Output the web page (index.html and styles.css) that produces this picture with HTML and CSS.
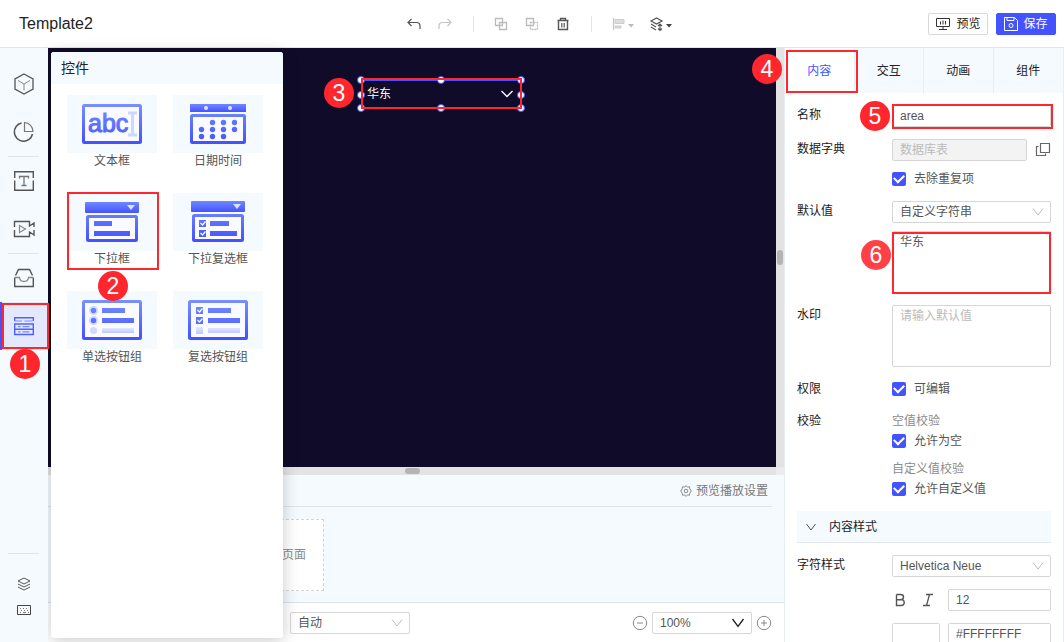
FILE: index.html
```html
<!DOCTYPE html>
<html lang="zh-CN">
<head>
<meta charset="utf-8">
<title>Template2</title>
<link rel="stylesheet" href="styles.css">
</head>
<body>
<svg class="defs" width="0" height="0" aria-hidden="true">
  <defs>
    <linearGradient id="g" x1="0" y1="9" x2="0" y2="49" gradientUnits="userSpaceOnUse"><stop offset="0" stop-color="#7890ff"/><stop offset="1" stop-color="#4350ff"/></linearGradient>
    <linearGradient id="bar" x1="0" y1="0" x2="0" y2="1"><stop offset="0" stop-color="#7088ff"/><stop offset="1" stop-color="#4553ff"/></linearGradient>
    <linearGradient id="pale" x1="0" y1="0" x2="0" y2="1"><stop offset="0" stop-color="#e3e8ff"/><stop offset="1" stop-color="#bcc8ff"/></linearGradient>
  </defs>
</svg>
<div class="app">
  <header class="topbar">
    <h1 class="title">Template2</h1>
    <div class="tools">
      <button class="tool" aria-label="撤销"><svg width="16" height="16" viewBox="0 0 16 16"><path d="M5.500 3 2 6.500 5.500 10M2 6.500h8.500q3.500 0 3.500 3.500v3" stroke="#555" stroke-width="1.200"/></svg></button>
      <button class="tool" aria-label="重做"><svg width="16" height="16" viewBox="0 0 16 16"><path d="M10.500 3 14 6.500 10.500 10M14 6.500H5.500Q2 6.500 2 10v3" stroke="#c4c4c4" stroke-width="1.200"/></svg></button>
      <i class="sep"></i>
      <button class="tool" aria-label="组合"><svg width="16" height="16" viewBox="0 0 16 16"><path d="M2.500 2.500h7v7h-7zM6.500 6.500h7v7h-7z" stroke="#bbb" stroke-width="1.300"/></svg></button>
      <button class="tool" aria-label="取消组合"><svg width="16" height="16" viewBox="0 0 16 16"><path d="M2.500 2.500h7v7h-7z" stroke="#bbb" stroke-width="1.300"/><path d="M6.500 6.500h7v7h-7z" stroke="#bbb" stroke-width="1.300" stroke-dasharray="2 1"/></svg></button>
      <button class="tool" aria-label="删除"><svg width="16" height="16" viewBox="0 0 16 16"><path d="M2.500 4.500h11M5.500 4V2.500h5V4M3.500 5v8.500h9V5" stroke="#555" stroke-width="1.400"/><path d="M6.500 7v4.500M8 7v4.500M9.500 7v4.500" stroke="#777"/></svg></button>
      <i class="sep"></i>
      <button class="tool wide" aria-label="对齐"><svg width="24" height="16" viewBox="0 0 24 16"><path d="M2.500 2v12" stroke="#c4c4c4" stroke-width="1.200"/><path d="M4 3.500h9v4H4zM4 10h6v2H4z" fill="#ddd" stroke="#ccc"/><path d="M17 8h6l-3 3.500z" fill="#bbb"/></svg></button>
      <button class="tool wide" aria-label="图层顺序"><svg width="24" height="16" viewBox="0 0 24 16"><path d="M2 5 7.500 2 13 5 7.500 8zM2 8l5 3M2 11l5 3M11 8v6.500M9 10l2-2 2 2M9 12.500l2 2 2-2" stroke="#555" stroke-width="1.200"/><path d="M17 8h6l-3 3.500z" fill="#444"/></svg></button>
    </div>
    <div class="actions">
      <button class="btn"><svg width="16" height="14" viewBox="0 0 16 14"><path d="M1.500 1.500h13v8h-13zM4 12.500h8M8 10v2M5.500 4.500v3M8 3.500v4M10.500 4v3.500" stroke="#333"/></svg>预览</button>
      <button class="btn primary"><svg width="14" height="14" viewBox="0 0 14 14"><path d="M.5.5h10l3 3v10H.5zM3 .5v3h7v-3" stroke="#fff"/><circle cx="7" cy="8.500" r="2" stroke="#fff"/></svg>保存</button>
    </div>
  </header>

  <nav class="rail" aria-label="组件类型">
    <button class="rail-item" aria-label="模型"><svg width="22" height="22" viewBox="0 0 22 22"><path d="M11 1 20 6v10l-9 5-9-5V6z" stroke="#555" stroke-width="1.300"/><path d="M5 7.500l6 3.500 6-3.500M11 11v6.500" stroke="#888"/></svg></button>
    <button class="rail-item" aria-label="图表"><svg width="22" height="22" viewBox="0 0 22 22"><path d="M8.500 2a9.200 9.200 0 1 0 11 11" stroke="#555" stroke-width="1.500"/><path d="M11.500 1.500v9h8.500a9 9 0 0 0-8.500-9z" stroke="#777" stroke-width="1.200"/></svg></button>
    <i class="rule"></i>
    <button class="rail-item" aria-label="文本"><svg width="22" height="22" viewBox="0 0 22 22"><path d="M1.700 8V1.700h18.600V8M1.700 10.500v9.800h18.600v-9.800" stroke="#555" stroke-width="1.400"/><path d="M6.500 8.500v-2h9v2M11 6.500v9M8.500 15.500h5" stroke="#777" stroke-width="1.300"/></svg></button>
    <button class="rail-item" aria-label="媒体"><svg width="22" height="22" viewBox="0 0 22 22"><path d="M1.500 9V3.500h15V8l4.500-3v4M1.500 12v6.500h15V14l4.500 3v-5" stroke="#555" stroke-width="1.400"/><path d="M6.500 7.500v7l6-3.500z" stroke="#888" stroke-width="1.200"/></svg></button>
    <i class="rule"></i>
    <button class="rail-item" aria-label="素材"><svg width="22" height="22" viewBox="0 0 22 22"><path d="M1.700 10.500v9h18.600v-9M2.500 8.500 5.500 2.500h11l3 6" stroke="#555" stroke-width="1.400"/><path d="M2 10.500h4.500q.5 4 4.500 4t4.500-4H20" stroke="#888" stroke-width="1.300"/></svg></button>
    <button class="rail-item active" aria-label="控件"><svg width="22" height="22" viewBox="0 0 22 22"><path d="M1.700 6V2.700h18.600V6M1.700 9h18.600v10.500H1.700zM1.700 14.200h18.600" stroke="#5061ff" stroke-width="1.400"/><path d="M1.700 6H9m2.500 0h8M5 11.600h2.500m2 0h7M5 16.800h2.500m2 0h7" stroke="#7c8aff" stroke-width="1.200"/></svg><b class="badge b1">1</b></button>
    <div class="rail-bottom">
      <i class="rule"></i>
      <button class="rail-small" aria-label="图层"><svg width="14" height="14" viewBox="0 0 14 14"><path d="M1 4 7 1l6 3-6 3zM1 7l6 3 6-3M1 10l6 3 6-3" stroke="#555"/></svg></button>
      <button class="rail-small" aria-label="快捷键"><svg width="14" height="10" viewBox="0 0 14 10"><path d="M.5.500h13v9H.5z" stroke="#444"/><path d="M3 3.500h1m2 0h1m2 0h1M4 5.500h1m2 0h1m2 0h1M3 7.500h1m2 0h3m2 0h1" stroke="#777"/></svg></button>
    </div>
  </nav>

  <main class="work">
    <div class="stage">
      <div class="canvas">
        <div class="widget">
          <select aria-label="area"><option>华东</option></select>
          <svg class="chev" width="14" height="8" viewBox="0 0 14 8"><path d="M1.500 1 7 6.500 12.500 1" stroke="#fff" stroke-width="1.300"/></svg>
          <i class="h tl"></i><i class="h tc"></i><i class="h tr"></i><i class="h ml"></i><i class="h mr"></i><i class="h bl"></i><i class="h bc"></i><i class="h br"></i>
          <b class="badge b3">3</b>
        </div>
      </div>
      <div class="vbar"><i></i></div>
      <div class="hbar"><i></i></div>
    </div>
    <section class="pages">
      <div class="pages-head"><button class="link"><svg width="12" height="12" viewBox="0 0 12 12"><path d="M6 .7 7.500 2l2-.2.300 2L11.300 6 9.800 8.200l-.3 2-2-.2L6 11.300 4.500 10l-2 .2-.3-2L.7 6l1.500-2.200.3-2 2 .2z" stroke="#888"/><circle cx="6" cy="6" r="1.800" stroke="#888"/></svg>预览播放设置</button></div>
      <button class="add-page">页面</button>
    </section>
    <footer class="status">
      <span class="pick fit"><select aria-label="适应方式"><option>自动</option></select><svg width="12" height="8" viewBox="0 0 12 8"><path d="M1 .5 6 7l5-6.500" stroke="#bbb"/></svg></span>
      <div class="zoomer">
        <button class="round" aria-label="缩小"><svg width="16" height="16" viewBox="0 0 16 16"><circle cx="8" cy="8" r="6.700" stroke="#888"/><path d="M5 8h6" stroke="#888"/></svg></button>
        <span class="pick scale"><select aria-label="缩放"><option>100%</option></select><svg width="14" height="10" viewBox="0 0 14 10"><path d="M1.500 1 7 8.500 12.500 1" stroke="#222" stroke-width="1.300"/></svg></span>
        <button class="round" aria-label="放大"><svg width="16" height="16" viewBox="0 0 16 16"><circle cx="8" cy="8" r="6.700" stroke="#888"/><path d="M5 8h6M8 5v6" stroke="#888"/></svg></button>
      </div>
    </footer>

    <section class="drawer">
      <h2>控件</h2>
      <div class="tiles">
        <button class="tile"><svg width="90" height="58" viewBox="0 0 90 58"><rect x="16.500" y="10.500" width="57" height="37" rx="1" fill="#f9fbff" stroke="url(#g)" stroke-width="3"/><text x="21" y="37" class="abc">abc</text><path d="M61 18h9M61 40h9M65.500 18v22" stroke="#cdd7ff" stroke-width="3"/></svg><span>文本框</span></button>
        <button class="tile"><svg width="90" height="58" viewBox="0 0 90 58"><rect x="17" y="9" width="56" height="8" fill="url(#bar)"/><circle cx="33" cy="13" r="2" fill="#dde4ff"/><circle cx="57" cy="13" r="2" fill="#dde4ff"/><rect x="18.500" y="20.500" width="53" height="27" rx="1" stroke="url(#g)" stroke-width="3" fill="#f9fbff"/><g fill="url(#g)"><circle cx="39.500" cy="27.500" r="2.700"/><circle cx="50.500" cy="27.500" r="2.700"/><circle cx="61.500" cy="27.500" r="2.700"/><circle cx="28.500" cy="34.500" r="2.700"/><circle cx="39.500" cy="34.500" r="2.700"/><circle cx="50.500" cy="34.500" r="2.700"/><circle cx="61.500" cy="34.500" r="2.700"/><circle cx="28.500" cy="41.500" r="2.700"/><circle cx="39.500" cy="41.500" r="2.700"/><circle cx="50.500" cy="41.500" r="2.700"/></g></svg><span>日期时间</span></button>
        <button class="tile marked"><svg width="90" height="58" viewBox="0 0 90 58"><rect x="18" y="9" width="54" height="11" rx="1" fill="url(#bar)"/><path d="M60 12h8l-4 5z" fill="#dde4ff"/><rect x="20.500" y="23.500" width="49" height="24" rx="1" stroke="url(#g)" stroke-width="3" fill="#f9fbff"/><rect x="27" y="28" width="18" height="5" fill="url(#g)"/><rect x="27" y="38" width="36" height="5" fill="url(#g)"/></svg><span>下拉框</span><b class="badge b2">2</b></button>
        <button class="tile"><svg width="90" height="58" viewBox="0 0 90 58"><rect x="18" y="8" width="54" height="11" rx="1" fill="url(#bar)"/><path d="M60 11h8l-4 5z" fill="#dde4ff"/><rect x="20.500" y="22.500" width="49" height="25" rx="1" stroke="url(#g)" stroke-width="3" fill="#f9fbff"/><path d="M26 27h7v7h-7zM26 37h7v7h-7zM37 28h19v5H37zM37 38h27v5H37z" fill="url(#g)"/><path d="m27.500 30 2 2 3-3.500M27.500 40l2 2 3-3.500" stroke="#fff" stroke-width="1.200"/></svg><span>下拉复选框</span></button>
        <button class="tile"><svg width="90" height="58" viewBox="0 0 90 58"><rect x="16.500" y="10.500" width="57" height="37" rx="1" fill="#f9fbff" stroke="url(#g)" stroke-width="3"/><g fill="#d0d9ff"><circle cx="26.500" cy="19.500" r="4.500"/><circle cx="26.500" cy="29.500" r="4.500"/><circle cx="26.500" cy="39.500" r="3.500"/></g><g fill="url(#g)"><circle cx="26.500" cy="19.500" r="2.700"/><circle cx="26.500" cy="29.500" r="2.700"/><path d="M35 17h23v5H35zM35 27h32v5H35z"/></g><rect x="35" y="37" width="32" height="5" fill="url(#pale)"/></svg><span>单选按钮组</span></button>
        <button class="tile"><svg width="90" height="58" viewBox="0 0 90 58"><rect x="16.500" y="10.500" width="57" height="37" rx="1" fill="#f9fbff" stroke="url(#g)" stroke-width="3"/><path d="M23 16h7v7h-7zM23 26h7v7h-7zM35 17h23v5H35zM35 27h32v5H35z" fill="url(#g)"/><path d="m24.500 19 2 2 3-3.500M24.500 29l2 2 3-3.500" stroke="#fff" stroke-width="1.200"/><path d="M23 36h7v7h-7zM35 37h32v5H35z" fill="url(#pale)"/></svg><span>复选按钮组</span></button>
      </div>
    </section>
  </main>

  <aside class="props">
    <div class="tabs" role="tablist">
      <button class="tab on" role="tab">内容<b class="badge b4">4</b></button>
      <button class="tab" role="tab">交互</button>
      <button class="tab" role="tab">动画</button>
      <button class="tab" role="tab">组件</button>
    </div>
    <form class="form">
      <div class="row"><label for="name">名称</label><div class="field mark-name"><input class="box" id="name" value="area"><b class="badge b5">5</b></div></div>
      <div class="row"><label for="dict">数据字典</label><div class="field stack">
        <div class="with-icon"><input class="box" id="dict" placeholder="数据库表" disabled><svg width="16" height="16" viewBox="0 0 16 16"><path d="M5.500 1.500h9v9h-9zM3.500 4.500h-2v9h9v-2" stroke="#666" stroke-width="1.200"/></svg></div>
        <label class="check"><input type="checkbox" checked>去除重复项</label></div></div>
      <div class="row"><label for="def">默认值</label><div class="field stack">
        <span class="pick"><select id="def"><option>自定义字符串</option></select><svg width="12" height="8" viewBox="0 0 12 8"><path d="M1 .5 6 7l5-6.500" stroke="#bbb"/></svg></span>
        <div class="mark-area"><textarea class="box" aria-label="默认值内容">华东</textarea><b class="badge b6">6</b></div></div></div>
      <div class="row"><label for="hint">水印</label><div class="field"><textarea class="box" id="hint" placeholder="请输入默认值"></textarea></div></div>
      <div class="row"><span>权限</span><div class="field"><label class="check"><input type="checkbox" checked>可编辑</label></div></div>
      <div class="row"><span>校验</span><div class="field stack">
        <div><p>空值校验</p><label class="check"><input type="checkbox" checked>允许为空</label></div>
        <div><p>自定义值校验</p><label class="check"><input type="checkbox" checked>允许自定义值</label></div></div></div>
      <button type="button" class="section"><svg width="10" height="8" viewBox="0 0 10 8"><path d="M.5 1 5 7l4.500-6" stroke="#555"/></svg>内容样式</button>
      <div class="row"><label for="font">字符样式</label><div class="field stack loose">
        <span class="pick"><select id="font"><option>Helvetica Neue</option></select><svg width="12" height="8" viewBox="0 0 12 8"><path d="M1 .5 6 7l5-6.500" stroke="#bbb"/></svg></span>
        <div class="pair"><span class="styles"><button type="button" aria-label="加粗"><svg width="16" height="14" viewBox="0 0 16 14"><path d="M4.500 1.500h4q3 0 3 2.600T8.500 6.700h-4M4.500 1.500v11h4.700q3 0 3-3t-3-2.800" stroke="#555" stroke-width="1.400"/></svg></button><button type="button" aria-label="倾斜"><svg width="16" height="14" viewBox="0 0 16 14"><path d="M6 1.500h7M3 12.500h7M9.500 1.500l-3 11" stroke="#555" stroke-width="1.300"/></svg></button></span><input class="box" aria-label="字号" value="12"></div>
        <div class="pair"><button type="button" class="box swatch" aria-label="颜色"></button><input class="box" aria-label="颜色值" value="#FFFFFFFF"></div></div></div>
    </form>
  </aside>
</div>
</body>
</html>
```

FILE: styles.css
```css
* { box-sizing: border-box; }
body {
  margin: 0;
  font: 12px/20px "Liberation Sans", "Noto Sans CJK SC", sans-serif;
  color: #555;
}
button, input, select, textarea { font: inherit; color: inherit; margin: 0; }
button { background: none; border: 0; padding: 0; }
svg { fill: none; flex: none; display: block; }
h1, h2, p { margin: 0; font-weight: 400; }
.defs { position: absolute; }

.app {
  display: grid;
  grid-template: 48px minmax(0, 1fr) / 48px minmax(0, 1fr) 280px;
  height: 100vh;
  overflow: hidden;
}

/* Top bar */
.topbar {
  grid-column: 1 / -1;
  display: grid;
  grid-template-columns: minmax(0, 1fr) auto minmax(0, 1fr);
  align-items: center;
  background: #fff;
  border-bottom: 1px solid #e2e5e8;
}
.title { font-size: 16px; color: #222; padding-left: 19px; }
.tools { display: flex; align-items: center; padding-left: 14px; }
.tool { width: 31px; height: 32px; display: flex; align-items: center; justify-content: center; }
.tool.wide { width: 38px; }
.sep { width: 1px; height: 16px; background: #e4e4e4; margin: 0 12px; }
.actions { display: flex; justify-content: flex-end; gap: 8px; padding-right: 8px; }
.btn {
  display: flex; align-items: center; justify-content: center; gap: 5px;
  width: 60px; height: 22px;
  border: 1px solid #d9d9d9; border-radius: 2px;
  color: #222;
}
.btn.primary { background: #4353ff; border-color: #4353ff; color: #fff; }

/* Left rail */
.rail {
  display: flex; flex-direction: column;
  padding-top: 12px;
  background: #f5fafe;
  position: relative; z-index: 3;
}
.rail-item { height: 48px; display: flex; align-items: center; justify-content: center; position: relative; }
.rail-item.active { background: #e3e8fd; box-shadow: inset 2px 0 #4353ff; }
.rail-item.active::after {
  content: ""; position: absolute; inset: 1px -1px 1px 2px;
  border: 2px solid #ff262d;
}
.rule { height: 1px; background: #e0e4e8; margin: 0 9px 0 8px; }
.rail-bottom { margin-top: auto; padding-bottom: 19px; display: flex; flex-direction: column; }
.rail-bottom .rule { margin-bottom: 17px; }
.rail-small { height: 26px; display: flex; align-items: center; justify-content: center; }

/* Numbered callouts */
.badge {
  position: absolute; z-index: 5;
  width: 30px; height: 30px; border-radius: 50%;
  background: #ff262d; color: #fff;
  font: 23px/30px "Liberation Sans", sans-serif;
  text-align: center;
}
.b1 { left: 10px; top: 47px; }
.b2 { left: 31px; top: 78px; }
.b3 { right: 100%; top: -3px; margin-right: 7px; }
.b4 { left: -33px; top: 6px; }
.b5 { left: -32px; top: -4px; }
.b6 { left: -31px; top: 9px; opacity: .88; }

/* Stage */
.work {
  position: relative;
  display: grid;
  grid-template-rows: minmax(0, 1fr) 127px 40px;
}
.stage {
  display: grid;
  grid-template: minmax(0, 1fr) 8px / minmax(0, 1fr) 8px;
  background: #ececec;
}
.canvas { background: #100b29; position: relative; }
.vbar, .hbar { background: #e3e3e3; display: flex; align-items: center; justify-content: center; }
.vbar i { width: 6px; height: 15px; border-radius: 3px; background: #b4b4b4; }
.hbar i { width: 15px; height: 6px; border-radius: 3px; background: #b4b4b4; }
.widget {
  position: absolute; left: 313px; top: 32px;
  width: 160px; height: 28px;
  border-top: 1px solid #4353ff;
}
.widget::after {
  content: ""; position: absolute; inset: -3px -1px -1px 0;
  border: 2px solid #ff262d; pointer-events: none;
}
.widget select {
  appearance: none; width: 100%; height: 26px;
  background: none; border: 0; padding: 0 6px; color: #fff;
}
.chev { position: absolute; right: 7px; top: 9px; }
.h { position: absolute; width: 8px; height: 8px; margin: -4px; border-radius: 50%; background: #fff; border: 1px solid #4353ff; }
.tl, .tc, .tr { top: -1px; }
.ml, .mr { top: 50%; }
.bl, .bc, .br { top: 100%; }
.tl, .ml, .bl { left: 0; }
.tc, .bc { left: 50%; }
.tr, .mr, .br { left: 100%; }

.pages { background: #f5fafe; }
.pages-head {
  display: flex; justify-content: flex-end; align-items: center;
  height: 32px; margin-right: 12px; padding-right: 4px;
  border-bottom: 1px solid #e0e4e8;
}
.link { display: flex; align-items: center; gap: 4px; color: #777; }
.add-page {
  display: flex; align-items: center; justify-content: flex-end;
  width: 128px; height: 72px; margin: 12px 0 0 148px; padding-right: 17px;
  background: #fff; border: 1px dashed #d4d4d4; color: #888;
}
.status {
  display: flex; align-items: center; justify-content: space-between;
  padding: 0 12px 0 242px;
  border-top: 1px solid #e0e4e8; background: #fff;
}
.zoomer { display: flex; align-items: center; gap: 4px; }
.fit { width: 120px; }
.scale { width: 100px; }

/* Component drawer */
.drawer {
  position: absolute; left: 3px; top: 4px; bottom: 4px; z-index: 2;
  width: 232px; border-radius: 3px;
  background: #fff;
  box-shadow: 0 2px 16px rgba(0, 0, 0, .22);
}
.drawer h2 {
  font-size: 14px; line-height: 32px; padding-left: 10px;
  background: #f5fafe; color: #222; border-radius: 3px 3px 0 0;
}
.tiles { display: grid; grid-template-columns: 90px 90px; gap: 22px 16px; padding: 11px 16px; }
.tile {
  position: relative; display: flex; flex-direction: column; align-items: center;
  height: 76px; line-height: 16px;
}
.tile svg { background: #f5fafe; }
.tile.marked::after {
  content: ""; position: absolute; inset: -1px -2px -1px 0;
  border: 2px solid #ff262d;
}
.abc { font: 25px "Liberation Sans", sans-serif; fill: url(#g); stroke: url(#g); stroke-width: 1px; }

/* Property panel */
.props {
  position: relative; z-index: 1;
  background: #fff;
  border: solid #e6eff6; border-width: 0 1px;
}
.tabs { display: grid; grid-template-columns: repeat(4, 1fr); height: 45px; background: #f5fafe; }
.tab { position: relative; border-right: 1px solid #e6eff6; color: #222; }
.tab:last-child { border-right: 0; }
.tab.on { background: #fff; color: #4353ff; }
.tab.on::after {
  content: ""; position: absolute; inset: 2px -4px 0 1px; z-index: 1;
  border: 2px solid #ff262d;
}
.form { display: grid; gap: 12px; padding: 12px; }
.row { display: grid; grid-template-columns: 95px minmax(0, 1fr); color: #222; }
.field { position: relative; color: #555; }
.stack { display: grid; gap: 8px; }
.stack.loose { gap: 12px; }
.box {
  display: block; width: 100%; height: 22px;
  border: 1px solid #d6d6d6; border-radius: 2px; background: #fff;
  padding: 0 7px; outline: 0;
}
.box::placeholder { color: #bbb; opacity: 1; }
.box:disabled { background: #f3f3f3; }
textarea.box { height: 62px; resize: none; line-height: 20px; }
.with-icon { display: flex; align-items: center; gap: 8px; }
.with-icon .box { flex: 1; min-width: 0; }
.check { display: flex; align-items: center; gap: 8px; }
.check input {
  appearance: none; width: 14px; height: 14px; border-radius: 2px;
  background: #4353ff; display: grid; place-items: center;
}
.check input::before {
  content: ""; width: 8px; height: 5px;
  border: solid #fff; border-width: 0 0 2px 2px;
  transform: rotate(-45deg); margin-bottom: 3px;
}
.field p { color: #8c8c8c; }
.pick { position: relative; display: block; }
.pick select {
  appearance: none; display: block; width: 100%; height: 22px;
  border: 1px solid #d6d6d6; border-radius: 2px; background: #fff;
  padding: 0 28px 0 7px;
}
.pick svg { position: absolute; right: 7px; top: 50%; translate: 0 -50%; pointer-events: none; }
.mark-area { position: relative; }
.mark-name::after, .mark-area::after {
  content: ""; position: absolute; inset: -1px -2px -2px 0;
  border: 2px solid #ff262d; pointer-events: none;
}
.mark-area::after { inset: 1px 0 -1px; }
.section {
  display: flex; align-items: center; gap: 13px;
  height: 32px; padding-left: 9px;
  background: #f5fafe; border-bottom: 1px solid #e6e9ec; color: #222;
}
.pair { display: grid; grid-template-columns: 48px minmax(0, 1fr); gap: 8px; }
.styles { display: flex; align-items: center; gap: 12px; }
```
